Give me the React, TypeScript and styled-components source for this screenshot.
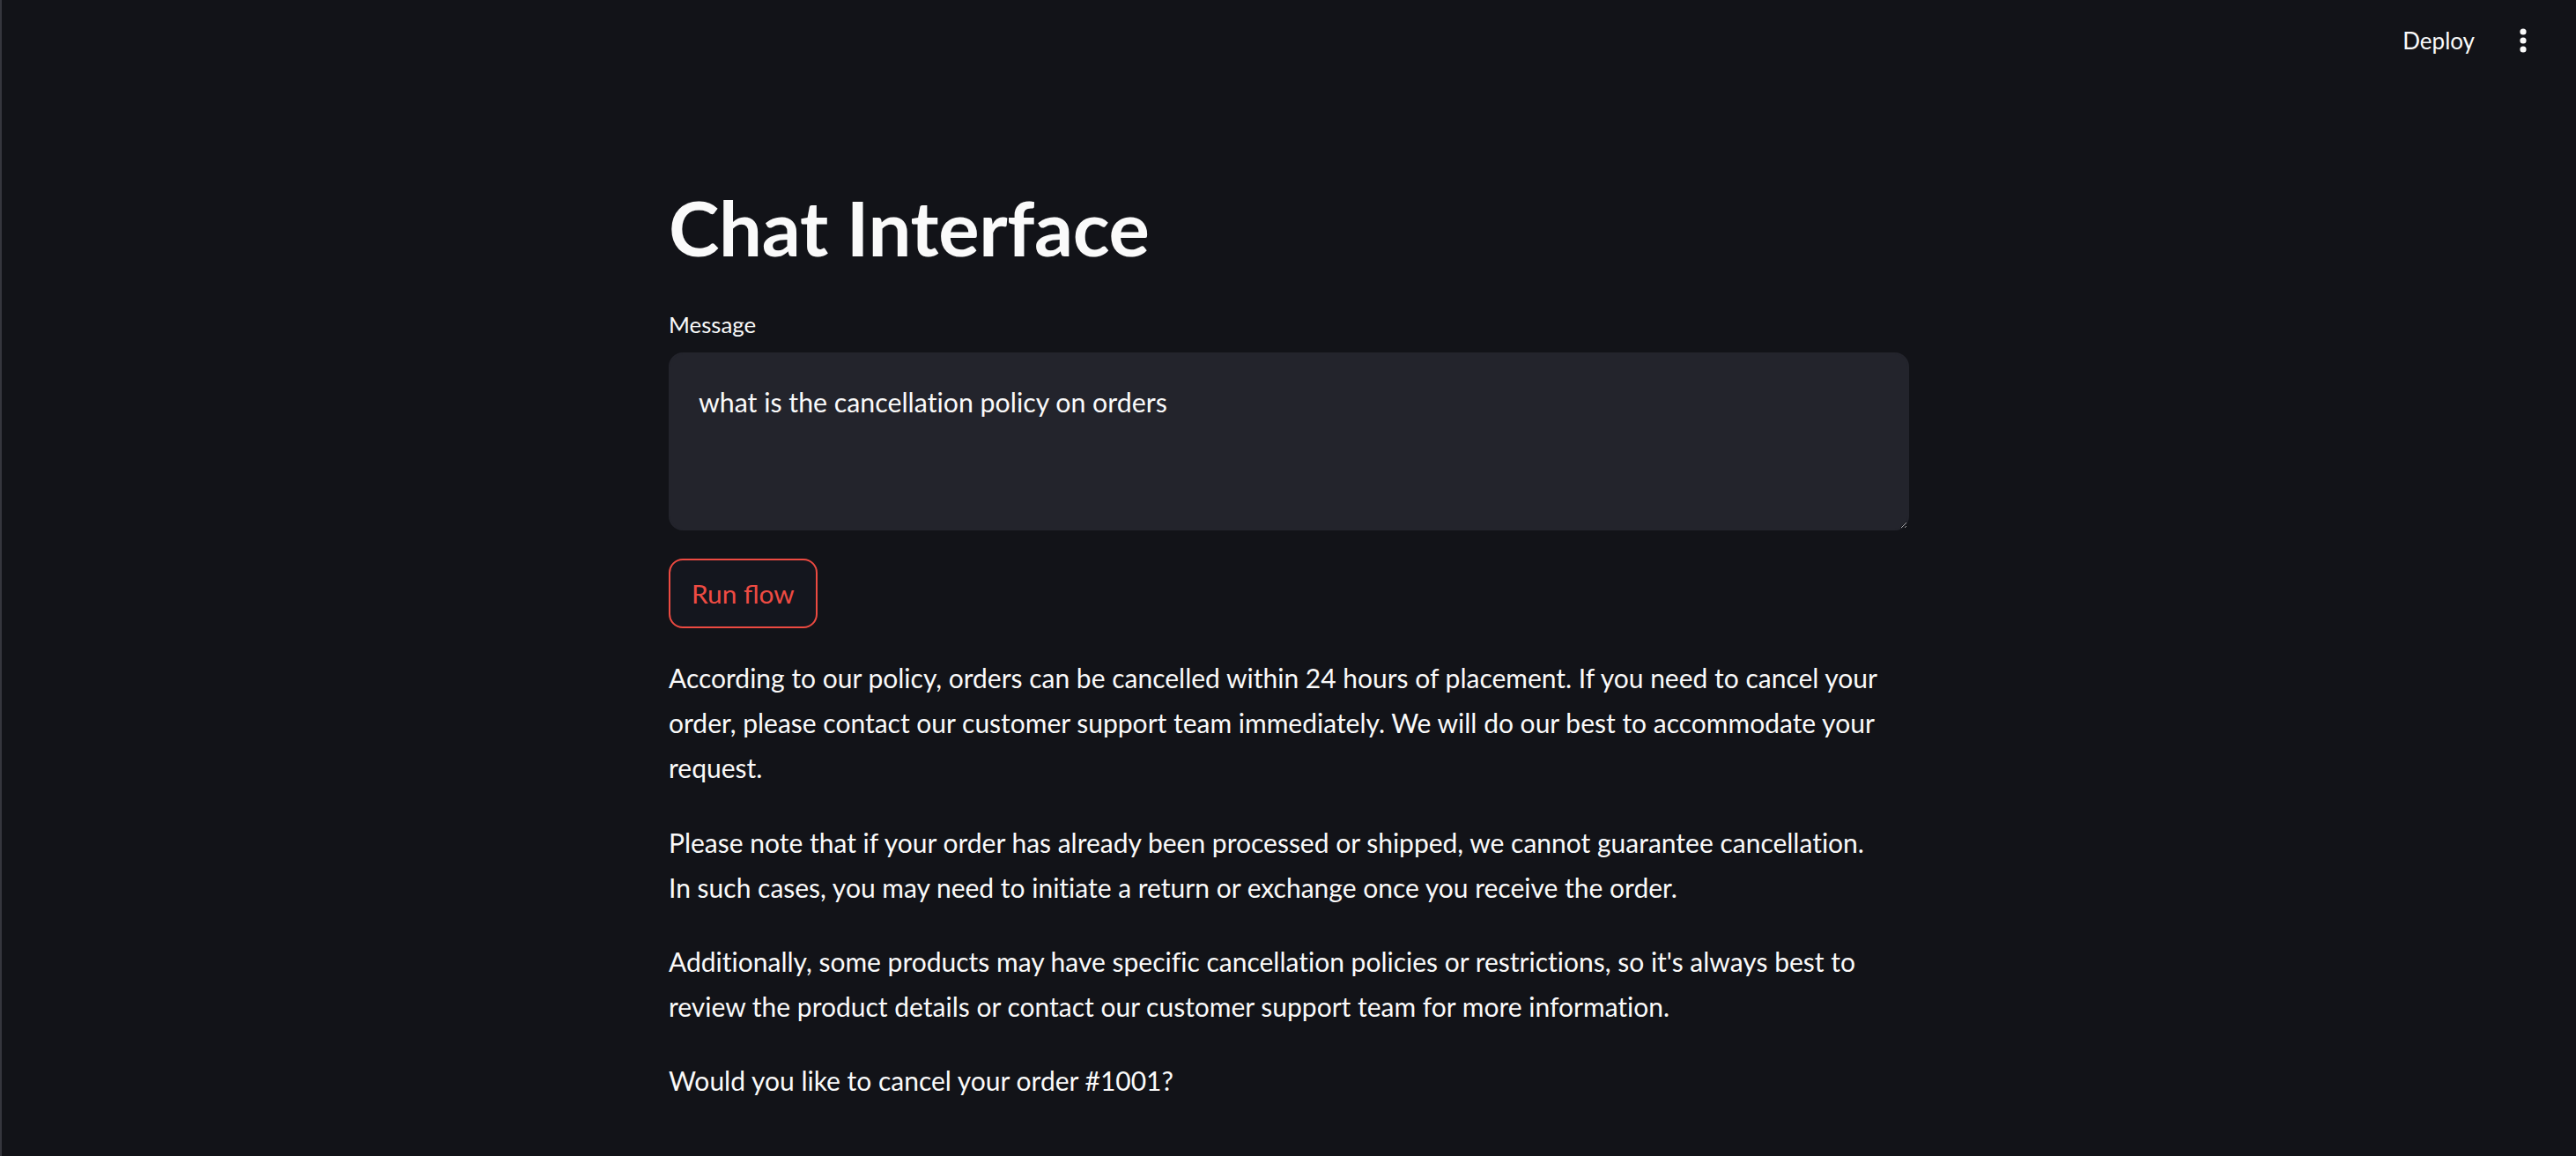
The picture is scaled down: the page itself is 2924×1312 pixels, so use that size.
import React from "react";
import styled, { createGlobalStyle } from "styled-components";

const GlobalStyle = createGlobalStyle`
  html, body {
    margin: 0;
    padding: 0;
    background: #121318;
  }
  body {
    font-family: Lato, "Noto Sans", sans-serif;
    color: #fafafa;
    font-variant-ligatures: none;
    -webkit-font-smoothing: antialiased;
  }
  * { box-sizing: border-box; }
`;

const AppShell = styled.div`
  min-height: 1312px;
  background: #121318;
  border-left: 2px solid #35363d;
`;

const Header = styled.header`
  height: 92px;
  display: flex;
  justify-content: flex-end;
  align-items: center;
  gap: 43px;
  padding-right: 48px;
`;

const DeployButton = styled.button`
  background: transparent;
  border: none;
  padding: 0;
  color: #fafafa;
  font-family: Lato, sans-serif;
  font-size: 26px;
  line-height: normal;
  cursor: pointer;
`;

const MenuButton = styled.button`
  background: transparent;
  border: none;
  padding: 0;
  width: 24px;
  height: 40px;
  display: flex;
  align-items: center;
  justify-content: center;
  color: #fafafa;
  cursor: pointer;
`;

const Main = styled.main`
  width: 1408px;
  margin: 0 auto;
  padding-top: 114px;
  display: flex;
  flex-direction: column;
`;

const Title = styled.h1`
  margin: 0;
  font-family: Lato, sans-serif;
  font-weight: 700;
  font-size: 86.8px;
  line-height: 102px;
  color: #fafafa;
  letter-spacing: -0.3px;
`;

const Label = styled.label`
  margin-top: 36px;
  height: 48px;
  line-height: 48px;
  font-size: 25.8px;
  color: #fafafa;
  margin-bottom: 8px;
`;

const TextArea = styled.textarea`
  display: block;
  width: 100%;
  height: 202px;
  margin: 0;
  padding: 32px 32px;
  background: #23242c;
  border: 2px solid #23242c;
  border-radius: 16px;
  color: #fafafa;
  font-family: Lato, sans-serif;
  font-variant-ligatures: none;
  font-size: 30.3px;
  line-height: 44px;
  resize: vertical;
  outline: none;
  color-scheme: dark;
`;

const RunButton = styled.button`
  align-self: flex-start;
  margin-top: 32px;
  height: 79px;
  padding: 0 24px;
  display: inline-flex;
  align-items: center;
  background: #14161e;
  border: 2px solid #ec4a41;
  border-radius: 16px;
  color: #ee4b43;
  font-family: Lato, sans-serif;
  font-size: 29.8px;
  line-height: normal;
  cursor: pointer;
`;

const Answer = styled.div`
  margin-top: 31px;
`;

const Paragraph = styled.p`
  margin: 0 0 33px 0;
  font-size: 30px;
  line-height: 51.2px;
  color: #fafafa;
`;

const Line = styled.span`
  display: block;
  white-space: nowrap;
`;

const MoreIcon = () => (
  <svg width="8" height="30" viewBox="0 0 8 30" aria-hidden="true">
    <circle cx="4" cy="5" r="3.6" fill="currentColor" />
    <circle cx="4" cy="15" r="3.6" fill="currentColor" />
    <circle cx="4" cy="25" r="3.6" fill="currentColor" />
  </svg>
);

const paragraphs: string[][] = [
  [
    "According to our policy, orders can be cancelled within 24 hours of placement. If you need to cancel your",
    "order, please contact our customer support team immediately. We will do our best to accommodate your",
    "request.",
  ],
  [
    "Please note that if your order has already been processed or shipped, we cannot guarantee cancellation.",
    "In such cases, you may need to initiate a return or exchange once you receive the order.",
  ],
  [
    "Additionally, some products may have specific cancellation policies or restrictions, so it's always best to",
    "review the product details or contact our customer support team for more information.",
  ],
  ["Would you like to cancel your order #1001?"],
];

export default function App() {
  return (
    <>
      <GlobalStyle />
      <AppShell>
        <Header>
          <DeployButton>Deploy</DeployButton>
          <MenuButton aria-label="Main menu">
            <MoreIcon />
          </MenuButton>
        </Header>
        <Main>
          <Title>Chat Interface</Title>
          <Label htmlFor="message">Message</Label>
          <TextArea id="message" defaultValue="what is the cancellation policy on orders" />
          <RunButton>Run flow</RunButton>
          <Answer>
            {paragraphs.map((lines, i) => (
              <Paragraph key={i}>
                {lines.map((l, j) => (
                  <Line key={j}>{l}</Line>
                ))}
              </Paragraph>
            ))}
          </Answer>
        </Main>
      </AppShell>
    </>
  );
}
